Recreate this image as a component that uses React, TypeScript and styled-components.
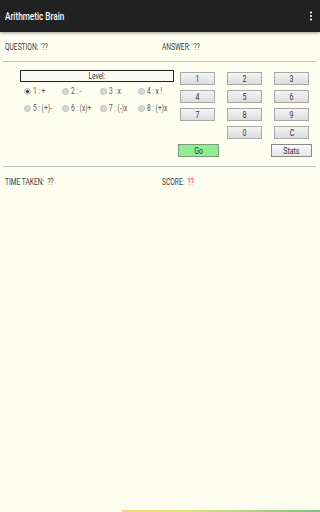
import React from "react";
import styled, { createGlobalStyle } from "styled-components";

const GlobalStyle = createGlobalStyle`
	html, body {
		margin: 0;
		padding: 0;
		background: #fefef0;
	}
	body {
		font-family: Roboto, "Liberation Sans", sans-serif;
	}
`;

const levels = ["1 : +", "2 : -", "3 : x", "4 : x !", "5 : (+)-", "6 : (x)+", "7 : (-)x", "8 : (+)x"];
const keys = ["1", "2", "3", "4", "5", "6", "7", "8", "9", "", "0", "C"];

function App() {
	return (
		<Page>
			<GlobalStyle />
			<TopBar>
				<Title>Arithmetic Brain</Title>
				<svg width="4" height="10" viewBox="0 0 4 10">
					<circle cx="2" cy="1.5" r="1.1" fill="#fff" />
					<circle cx="2" cy="5" r="1.1" fill="#fff" />
					<circle cx="2" cy="8.5" r="1.1" fill="#fff" />
				</svg>
			</TopBar>
			<InfoRow>
				<Cell>
					<Narrow>QUESTION:&nbsp; ??</Narrow>
				</Cell>
				<Cell>
					<Narrow>ANSWER:&nbsp; ??</Narrow>
				</Cell>
			</InfoRow>
			<Divider />
			<Panel>
				<LeftColumn>
					<LevelBox>
						<Narrow center>Level:</Narrow>
					</LevelBox>
					<RadioGrid>
						{levels.map((l, i) => (
							<RadioItem key={l}>
								<Radio checked={i === 0} />
								<Narrow>{l}</Narrow>
							</RadioItem>
						))}
					</RadioGrid>
				</LeftColumn>
				<RightColumn>
					<Keypad>
						{keys.map((k, i) =>
							k ? (
								<Key key={i}>
									<Narrow center>{k}</Narrow>
								</Key>
							) : (
								<span key={i} />
							)
						)}
					</Keypad>
					<ActionRow>
						<ActionButton go>
							<Narrow center>Go</Narrow>
						</ActionButton>
						<ActionButton>
							<Narrow center>Stats</Narrow>
						</ActionButton>
					</ActionRow>
				</RightColumn>
			</Panel>
			<Divider />
			<InfoRow>
				<Cell>
					<Narrow>TIME TAKEN:&nbsp; ??</Narrow>
				</Cell>
				<Cell>
					<Narrow>
						SCORE:&nbsp; <Red>??</Red>
					</Narrow>
				</Cell>
			</InfoRow>
			<Spacer />
			<BottomBar />
		</Page>
	);
}

const Page = styled.div`
	width: 320px;
	height: 512px;
	display: flex;
	flex-direction: column;
	background: #fefef0;
	overflow: hidden;
`;

// the screenshot uses a condensed face; squeeze the regular one to match
const Narrow = styled.span<{ center?: boolean }>`
	display: inline-block;
	white-space: nowrap;
	transform: scaleX(0.78);
	transform-origin: ${(p) => (p.center ? "center" : "left")};
`;

const TopBar = styled.div`
	height: 32px;
	flex-shrink: 0;
	background: #212121;
	display: flex;
	align-items: center;
	justify-content: space-between;
	padding: 0 7px 0 5px;
	box-shadow: 0 1px 3px rgba(0, 0, 0, 0.4);
`;

const Title = styled(Narrow)`
	color: #ffffff;
	font-size: 10.5px;
	font-weight: 500;
`;

const InfoRow = styled.div`
	height: 29px;
	display: flex;
	align-items: center;
	padding-left: 5px;
`;

const Cell = styled.div`
	width: 157px;
	font-size: 8.5px;
	color: #3a3a3a;
`;

const Red = styled.span`
	color: #ff2020;
`;

const Divider = styled.div`
	height: 1px;
	margin: 0 4px 0 3px;
	background: #c4c4c4;
`;

const Panel = styled.div`
	height: 104px;
	display: flex;
	padding-top: 8px;
	box-sizing: border-box;
`;

const LeftColumn = styled.div`
	margin-left: 20px;
	width: 154px;
	display: flex;
	flex-direction: column;
`;

const LevelBox = styled.div`
	height: 12px;
	box-sizing: border-box;
	border: 1px solid #222;
	background: #fafaf5;
	font-size: 8.5px;
	color: #333;
	display: flex;
	align-items: center;
	justify-content: center;
`;

const RadioGrid = styled.div`
	display: grid;
	grid-template-columns: repeat(4, 38px);
	row-gap: 7px;
	margin-top: 4px;
	padding-left: 4px;
`;

const RadioItem = styled.div`
	height: 10px;
	display: flex;
	align-items: center;
	gap: 1px;
	font-size: 8.5px;
	color: #555;
`;

const Radio = styled.span<{ checked?: boolean }>`
	width: 5px;
	height: 5px;
	flex-shrink: 0;
	border-radius: 50%;
	background: ${(p) =>
		p.checked
			? "radial-gradient(circle, #333 0 1.2px, #ddd 1.6px)"
			: "#d8d8d8"};
	border: 0.5px solid #bbb;
	margin-right: 1px;
`;

const RightColumn = styled.div`
	margin-left: 4px;
	width: 134px;
	display: flex;
	flex-direction: column;
`;

const Keypad = styled.div`
	display: grid;
	grid-template-columns: repeat(3, 35px);
	grid-auto-rows: 13px;
	column-gap: 12px;
	row-gap: 5px;
	margin-left: 2px;
	margin-top: 2px;
`;

const Key = styled.div`
	box-sizing: border-box;
	border: 1px solid #a8a8a8;
	background: linear-gradient(#f4f4f4, #dcdcdc);
	font-size: 9px;
	color: #333;
	display: flex;
	align-items: center;
	justify-content: center;
`;

const ActionRow = styled.div`
	display: flex;
	justify-content: space-between;
	margin-top: 5px;
	width: 134px;
`;

const ActionButton = styled.div<{ go?: boolean }>`
	width: 41px;
	height: 13px;
	box-sizing: border-box;
	border: 1px solid ${(p) => (p.go ? "#7a9a7a" : "#888")};
	background: ${(p) => (p.go ? "#90ee90" : "linear-gradient(#fafafa, #e4e4e4)")};
	font-size: 9px;
	color: #333;
	display: flex;
	align-items: center;
	justify-content: center;
`;

const Spacer = styled.div`
	flex: 1;
`;

const BottomBar = styled.div`
	height: 2px;
	margin-left: 122px;
	background: linear-gradient(90deg, #f5d27a, #f0e070 25%, #b5d88a 60%, #7cc07c);
`;

export default App;
